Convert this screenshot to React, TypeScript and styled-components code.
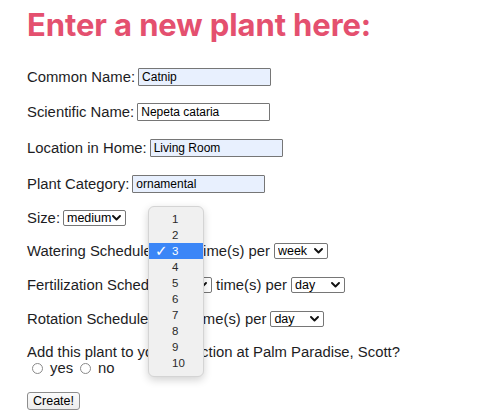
import React from "react";
import styled, { createGlobalStyle } from "styled-components";

const GlobalStyle = createGlobalStyle`
  html, body {
    margin: 0;
    padding: 0;
    background: #ffffff;
  }
  body {
    font-family: "Liberation Sans", Arial, sans-serif;
    color: #1d1d1f;
  }
`;

const numbers = ["1", "2", "3", "4", "5", "6", "7", "8", "9", "10"];
const periods = ["day", "week", "month"];

const Chevron = () => (
  <svg width="9" height="6" viewBox="0 0 9 6">
    <path d="M1 1 L4.5 4.5 L8 1" fill="none" stroke="#111" strokeWidth="1.9" strokeLinecap="round" strokeLinejoin="round" />
  </svg>
);

const Select: React.FC<{ value: string; width: number; options: string[] }> = ({ value, width, options }) => (
  <SelectWrap style={{ width }}>
    <NativeSelect defaultValue={value}>
      {options.map((o) => (
        <option key={o}>{o}</option>
      ))}
    </NativeSelect>
    <ChevronSpot>
      <Chevron />
    </ChevronSpot>
  </SelectWrap>
);

export default function App() {
  return (
    <Page>
      <GlobalStyle />
      <Title>Enter a new plant here:</Title>

      <Row $space={15}>
        Common Name:<TextInput $filled defaultValue="Catnip" />
      </Row>
      <Row $space={16}>
        Scientific Name:<TextInput defaultValue="Nepeta cataria" />
      </Row>
      <Row $space={16}>
        Location in Home:<TextInput $filled defaultValue="Living Room" />
      </Row>
      <Row $space={14}>
        Plant Category:<TextInput $filled defaultValue="ornamental" />
      </Row>
      <Row $space={13}>
        Size:<Select value="medium" width={63} options={["small", "medium", "large"]} />
      </Row>
      <Row $space={14} $gap={4}>
        Watering Schedule:<Select value="3" width={35} options={numbers} />
        time(s) per<Select value="week" width={54} options={periods} />
      </Row>
      <Row $space={14} $gap={4}>
        Fertilization Schedule:<Select value="1" width={35} options={numbers} />
        time(s) per<Select value="day" width={54} options={periods} />
      </Row>
      <Row $space={15} $gap={4}>
        Rotation Schedule:<Select value="1" width={35} options={numbers} />
        time(s) per<Select value="day" width={54} options={periods} />
      </Row>

      <Question>
        Add this plant to your collection at Palm Paradise, Scott?
        <RadioLine>
          <Radio type="radio" name="add" />
          yes
          <Radio type="radio" name="add" />
          no
        </RadioLine>
      </Question>

      <CreateButton type="button">Create!</CreateButton>

      <Dropdown>
        {numbers.map((n) => (
          <DropItem key={n} $selected={n === "3"}>
            <Check>{n === "3" ? "✓" : ""}</Check>
            {n}
          </DropItem>
        ))}
      </Dropdown>
    </Page>
  );
}

const Page = styled.div`
  position: relative;
  width: 489px;
  height: 420px;
  box-sizing: border-box;
  padding: 7px 0 0 27px;
  font-size: 14.85px;
  overflow: hidden;
`;

const Title = styled.h1`
  margin: 0 0 24px;
  font-family: Inter, "Liberation Sans", sans-serif;
  font-size: 31px;
  line-height: 36px;
  font-weight: 700;
  color: #e4506f;
  letter-spacing: -0.1px;
`;

const Row = styled.div<{ $space: number; $gap?: number }>`
  display: flex;
  align-items: center;
  height: 20px;
  margin-bottom: ${({ $space }) => $space}px;
  white-space: pre;
  gap: ${({ $gap }) => $gap ?? 3}px;
`;

const TextInput = styled.input<{ $filled?: boolean }>`
  box-sizing: border-box;
  width: 133px;
  height: 18px;
  margin: 0;
  padding: 0 3px;
  border: 1px solid #767676;
  border-radius: 1px;
  background: ${({ $filled }) => ($filled ? "#e8f0fe" : "#ffffff")};
  font-family: "Liberation Sans", Arial, sans-serif;
  font-size: 12px;
  color: #000;
  outline: none;
`;

const SelectWrap = styled.span`
  position: relative;
  display: inline-flex;
  height: 16px;
`;

const NativeSelect = styled.select`
  appearance: none;
  box-sizing: border-box;
  width: 100%;
  height: 16px;
  margin: 0;
  padding: 0 0 0 3px;
  border: 1px solid #767676;
  border-radius: 2px;
  background: #ffffff;
  font-family: "Liberation Sans", Arial, sans-serif;
  font-size: 12.5px;
  line-height: 14px;
  color: #000;
`;

const ChevronSpot = styled.span`
  position: absolute;
  right: 5px;
  top: 5px;
  display: flex;
  pointer-events: none;
`;

const Question = styled.div`
  line-height: 16px;
  margin-bottom: 16px;
`;

const RadioLine = styled.div`
  display: flex;
  align-items: center;
  gap: 7px;
  padding-left: 5px;
`;

const Radio = styled.input`
  appearance: none;
  box-sizing: border-box;
  width: 11px;
  height: 11px;
  margin: 0;
  border: 1px solid #8a8a8a;
  border-radius: 50%;
  background: #fff;
`;

const CreateButton = styled.button`
  box-sizing: border-box;
  width: 53px;
  height: 18px;
  padding: 0;
  border: 1px solid #8d8d8d;
  border-radius: 3px;
  background: linear-gradient(#fbfbfb, #ececec);
  font-family: "Liberation Sans", Arial, sans-serif;
  font-size: 12.5px;
  color: #000;
`;

const Dropdown = styled.div`
  position: absolute;
  left: 148px;
  top: 206px;
  width: 56px;
  box-sizing: border-box;
  padding: 4px 0 5px;
  background: #f0f0f0;
  border: 1px solid #d4d4d4;
  border-radius: 6px;
  box-shadow: 0 3px 8px rgba(0, 0, 0, 0.18);
`;

const DropItem = styled.div<{ $selected: boolean }>`
  display: flex;
  align-items: center;
  height: 16px;
  font-size: 11.5px;
  color: ${({ $selected }) => ($selected ? "#ffffff" : "#2a2a2a")};
  background: ${({ $selected }) => ($selected ? "#3b86f7" : "transparent")};
`;

const Check = styled.span`
  width: 23px;
  padding-left: 6px;
  box-sizing: border-box;
  font-family: "DejaVu Sans", sans-serif;
  font-size: 15px;
  line-height: 16px;
`;
